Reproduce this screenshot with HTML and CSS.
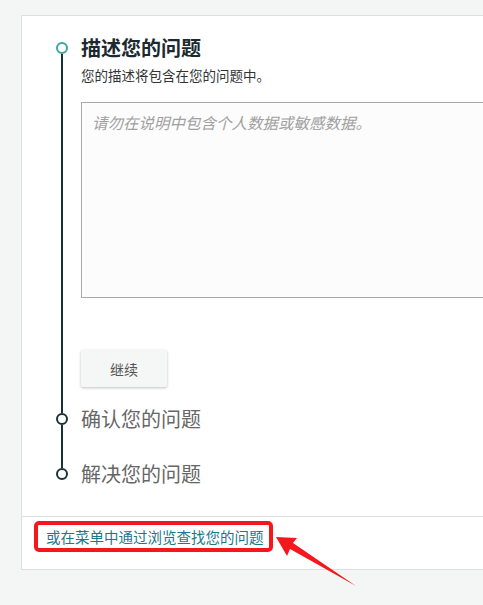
FILE: index.html
```html
<!DOCTYPE html>
<html lang="zh-CN">
<head>
    <meta charset="UTF-8">
    <meta name="viewport" content="width=device-width, initial-scale=1.0">
    <title>描述您的问题</title>
    <link rel="stylesheet" href="styles.css">
</head>
<body>
    <div class="page">
        <div class="card">
            <div class="steps">
                <div class="step">
                    <div class="rail">
                        <span class="gap"></span>
                        <span class="dot active"></span>
                        <span class="line"></span>
                    </div>
                    <div class="step-body first">
                        <h2 class="step-title">描述您的问题</h2>
                        <p class="step-desc">您的描述将包含在您的问题中。</p>
                        <textarea class="issue-text" placeholder="请勿在说明中包含个人数据或敏感数据。"></textarea>
                        <button class="continue-button" type="button">继续</button>
                    </div>
                </div>
                <div class="step">
                    <div class="rail">
                        <span class="line top"></span>
                        <span class="dot"></span>
                        <span class="line"></span>
                    </div>
                    <div class="step-body middle">
                        <div class="step-label">确认您的问题</div>
                    </div>
                </div>
                <div class="step">
                    <div class="rail">
                        <span class="line top"></span>
                        <span class="dot"></span>
                    </div>
                    <div class="step-body">
                        <div class="step-label">解决您的问题</div>
                    </div>
                </div>
            </div>
            <div class="card-footer">
                <span class="highlight"><a href="#" class="browse-link">或在菜单中通过浏览查找您的问题</a></span>
            </div>
        </div>
    </div>

    <!-- annotation arrow -->
    <svg class="arrow" width="483" height="605" viewBox="0 0 483 605">
        <polygon fill="#f5171b" points="276,537 297,538 293,543 356,586 290,549 287,556"/>
    </svg>
</body>
</html>
```

FILE: styles.css
```css
body {
    margin: 0;
    background-color: #f4f6f6;
    font-family: "Noto Sans CJK SC", "Microsoft YaHei", sans-serif;
    overflow: hidden;
}
.page {
    height: 605px;
    box-sizing: border-box;
    padding: 15px 0 0 21px;
    overflow: hidden;
}
.card {
    width: calc(100% + 160px);
    background-color: #fff;
    border: 1px solid #dcdedf;
}
.steps {
    padding: 20px 0 29px 34px;
}
.step {
    display: flex;
}
.rail {
    width: 12px;
    margin-right: 13px;
    display: flex;
    flex-direction: column;
    align-items: center;
    flex-shrink: 0;
}
.rail .gap {
    height: 6px;
}
.rail .line {
    width: 2px;
    flex: 1;
    background-color: #17333a;
}
.rail .line.top {
    flex: none;
    height: 7px;
}
.dot {
    width: 12px;
    height: 12px;
    box-sizing: border-box;
    border: 2px solid #17333a;
    border-radius: 50%;
    background-color: #fff;
}
.dot.active {
    border-color: #3ea3a6;
}
.step-body {
    flex: 1;
    min-width: 0;
}
.step-body.first {
    padding-bottom: 19px;
}
.step-body.middle {
    padding-bottom: 29px;
}
.step-title {
    margin: 0;
    font-size: 20px;
    line-height: 24px;
    font-weight: bold;
    color: #1b2a2f;
}
.step-desc {
    margin: 6px 0 0;
    font-size: 13.5px;
    line-height: 18px;
    color: #333;
}
.issue-text {
    display: block;
    margin-top: 18px;
    width: 100%;
    height: 196px;
    box-sizing: border-box;
    padding: 8px 10px;
    border: 1px solid #a9a9a9;
    background-color: #fcfcfc;
    font-family: inherit;
    font-size: 15.5px;
    resize: none;
}
.issue-text::placeholder {
    color: #a0a0a0;
    font-style: italic;
}
.continue-button {
    display: block;
    margin-top: 52px;
    width: 86px;
    height: 37px;
    border: none;
    border-radius: 2px;
    background-color: #f5f7f7;
    box-shadow: 0 1px 3px rgba(0, 0, 0, 0.25);
    color: #555;
    font-family: inherit;
    font-size: 14px;
    cursor: pointer;
}
.step-label {
    font-size: 20px;
    line-height: 26px;
    color: #666;
}
.card-footer {
    border-top: 1px solid #dcdedf;
    padding: 4px 0 17px 12px;
}
.highlight {
    display: inline-block;
    border: 4px solid #f5171b;
    border-radius: 5px;
    padding: 0 5px 0 8px;
}
.browse-link {
    display: block;
    font-size: 14.5px;
    line-height: 23px;
    color: #19798a;
    text-decoration: none;
}
.arrow {
    position: absolute;
    left: 0;
    top: 0;
    pointer-events: none;
}
```
